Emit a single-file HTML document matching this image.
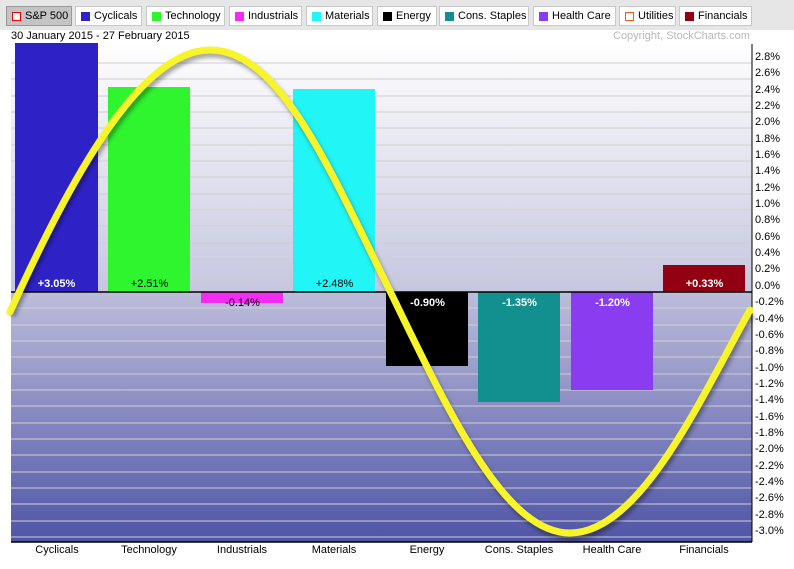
<!DOCTYPE html>
<html><head><style>
body{margin:0;width:794px;height:569px;background:#fff;font-family:"Liberation Sans",Arial,sans-serif;position:relative;overflow:hidden}
.bar{position:absolute;left:0;top:0;width:794px;height:30px;background:#e6e6e6}
.btn{position:absolute;top:6px;height:20px;background:#fff;border:1px solid #c8c8c8;font-size:11px;line-height:19px;box-sizing:border-box;padding-left:18px;color:#000;white-space:nowrap;overflow:hidden}
.btn i{position:absolute;left:5px;top:5px;width:9px;height:9px}
.yl{position:absolute;left:755px;font-size:11px;color:#000}
.xl{position:absolute;top:544px;font-size:11px;width:100px;text-align:center}
.v{position:absolute;font-size:11px;width:83px;text-align:center}
.w{color:#fff;font-weight:bold}
</style></head><body>
<div class="bar"></div>
<div class="btn" style="left:6px;width:66px;background:#c4c4c4;border-color:#999"><i style="border:1px solid #e00;background:#fff;width:7px;height:7px"></i>S&amp;P 500</div>
<div class="btn" style="left:75px;width:67px"><i style="background:#2e22c6"></i>Cyclicals</div>
<div class="btn" style="left:146px;width:79px"><i style="background:#2ef52e"></i>Technology</div>
<div class="btn" style="left:229px;width:73px"><i style="background:#f22cf2"></i>Industrials</div>
<div class="btn" style="left:306px;width:67px"><i style="background:#22f5f5"></i>Materials</div>
<div class="btn" style="left:377px;width:60px"><i style="background:#000"></i>Energy</div>
<div class="btn" style="left:439px;width:90px"><i style="background:#128f8f"></i>Cons. Staples</div>
<div class="btn" style="left:533px;width:83px"><i style="background:#8a3cf0"></i>Health Care</div>
<div class="btn" style="left:619px;width:57px"><i style="border:1px solid #f55a1a;background:#fff;width:7px;height:7px"></i>Utilities</div>
<div class="btn" style="left:679px;width:73px"><i style="background:#920012"></i>Financials</div>
<div style="position:absolute;left:11px;top:30px;font-size:11px">30 January 2015 - 27 February 2015</div>
<div style="position:absolute;left:613px;top:30px;font-size:11px;color:#b8b8b8">Copyright, StockCharts.com</div>
<svg style="position:absolute;left:0;top:0" width="794" height="569">
<defs>
<linearGradient id="up" x1="0" y1="0" x2="0" y2="1"><stop offset="0" stop-color="#ffffff"/><stop offset="1" stop-color="#c6c6e0"/></linearGradient>
<linearGradient id="dn" x1="0" y1="0" x2="0" y2="1"><stop offset="0" stop-color="#bdbddb"/><stop offset="1" stop-color="#4f54a6"/></linearGradient>
<filter id="sh"><feGaussianBlur stdDeviation="2"/></filter>
</defs>
<rect x="11" y="44" width="741" height="248" fill="url(#up)"/>
<rect x="11" y="292" width="741" height="250" fill="url(#dn)"/>
<g stroke="#cfcfcf" stroke-width="1">
<line x1="11" x2="752" y1="63" y2="63"/><line x1="11" x2="752" y1="79" y2="79"/><line x1="11" x2="752" y1="96" y2="96"/><line x1="11" x2="752" y1="112" y2="112"/><line x1="11" x2="752" y1="128" y2="128"/><line x1="11" x2="752" y1="145" y2="145"/><line x1="11" x2="752" y1="161" y2="161"/><line x1="11" x2="752" y1="177" y2="177"/><line x1="11" x2="752" y1="194" y2="194"/><line x1="11" x2="752" y1="210" y2="210"/><line x1="11" x2="752" y1="226" y2="226"/><line x1="11" x2="752" y1="243" y2="243"/><line x1="11" x2="752" y1="259" y2="259"/><line x1="11" x2="752" y1="276" y2="276"/>
<line x1="11" x2="752" y1="308" y2="308"/><line x1="11" x2="752" y1="325" y2="325"/><line x1="11" x2="752" y1="341" y2="341"/><line x1="11" x2="752" y1="357" y2="357"/><line x1="11" x2="752" y1="374" y2="374"/><line x1="11" x2="752" y1="390" y2="390"/><line x1="11" x2="752" y1="406" y2="406"/><line x1="11" x2="752" y1="423" y2="423"/><line x1="11" x2="752" y1="439" y2="439"/><line x1="11" x2="752" y1="455" y2="455"/><line x1="11" x2="752" y1="472" y2="472"/><line x1="11" x2="752" y1="488" y2="488"/><line x1="11" x2="752" y1="504" y2="504"/><line x1="11" x2="752" y1="521" y2="521"/><line x1="11" x2="752" y1="537" y2="537"/>
</g>
<rect x="15" y="43" width="83" height="249" fill="#2e22c6"/>
<rect x="108" y="87" width="82" height="205" fill="#2ef52e"/>
<rect x="201" y="292" width="82" height="11" fill="#f22cf2"/>
<rect x="293" y="89" width="82" height="203" fill="#22f5f5"/>
<rect x="386" y="292" width="82" height="74" fill="#000"/>
<rect x="478" y="292" width="82" height="110" fill="#128f8f"/>
<rect x="571" y="292" width="82" height="98" fill="#8a3cf0"/>
<rect x="663" y="265" width="82" height="27" fill="#920012"/>
<line x1="11" x2="752" y1="292" y2="292" stroke="#000" stroke-width="1.5"/>
<line x1="11" x2="752" y1="542" y2="542" stroke="#000" stroke-width="1.5"/>
<line x1="752" x2="752" y1="44" y2="542" stroke="#000" stroke-width="1"/>
<path d="M12,316 C72,184 142,54 212,54 C282,54 332,174 392,295 C452,419 507,537 572,537 C642,537 702,404 752,314" fill="none" stroke="#000" stroke-opacity="0.35" stroke-width="7" filter="url(#sh)"/>
<path d="M10,312 C70,180 140,50 210,50 C280,50 330,170 390,291 C450,415 505,533 570,533 C640,533 700,400 750,310" fill="none" stroke="#f7f52a" stroke-width="7" stroke-linecap="round"/>
</svg>
<div class="v w" style="left:15px;top:278px">+3.05%</div>
<div class="v" style="left:108px;top:278px">+2.51%</div>
<div class="v" style="left:201px;top:297px">-0.14%</div>
<div class="v" style="left:293px;top:278px">+2.48%</div>
<div class="v w" style="left:386px;top:297px">-0.90%</div>
<div class="v w" style="left:478px;top:297px">-1.35%</div>
<div class="v w" style="left:571px;top:297px">-1.20%</div>
<div class="v w" style="left:663px;top:278px">+0.33%</div>
<div class="yl" style="top:51px">2.8%</div><div class="yl" style="top:67px">2.6%</div><div class="yl" style="top:84px">2.4%</div><div class="yl" style="top:100px">2.2%</div><div class="yl" style="top:116px">2.0%</div><div class="yl" style="top:133px">1.8%</div><div class="yl" style="top:149px">1.6%</div><div class="yl" style="top:165px">1.4%</div><div class="yl" style="top:182px">1.2%</div><div class="yl" style="top:198px">1.0%</div><div class="yl" style="top:214px">0.8%</div><div class="yl" style="top:231px">0.6%</div><div class="yl" style="top:247px">0.4%</div><div class="yl" style="top:263px">0.2%</div><div class="yl" style="top:280px">0.0%</div>
<div class="yl" style="top:296px">-0.2%</div><div class="yl" style="top:313px">-0.4%</div><div class="yl" style="top:329px">-0.6%</div><div class="yl" style="top:345px">-0.8%</div><div class="yl" style="top:362px">-1.0%</div><div class="yl" style="top:378px">-1.2%</div><div class="yl" style="top:394px">-1.4%</div><div class="yl" style="top:411px">-1.6%</div><div class="yl" style="top:427px">-1.8%</div><div class="yl" style="top:443px">-2.0%</div><div class="yl" style="top:460px">-2.2%</div><div class="yl" style="top:476px">-2.4%</div><div class="yl" style="top:492px">-2.6%</div><div class="yl" style="top:509px">-2.8%</div><div class="yl" style="top:525px">-3.0%</div>
<div class="xl" style="left:7px">Cyclicals</div>
<div class="xl" style="left:99px">Technology</div>
<div class="xl" style="left:192px">Industrials</div>
<div class="xl" style="left:284px">Materials</div>
<div class="xl" style="left:377px">Energy</div>
<div class="xl" style="left:469px">Cons. Staples</div>
<div class="xl" style="left:562px">Health Care</div>
<div class="xl" style="left:654px">Financials</div>
</body></html>
